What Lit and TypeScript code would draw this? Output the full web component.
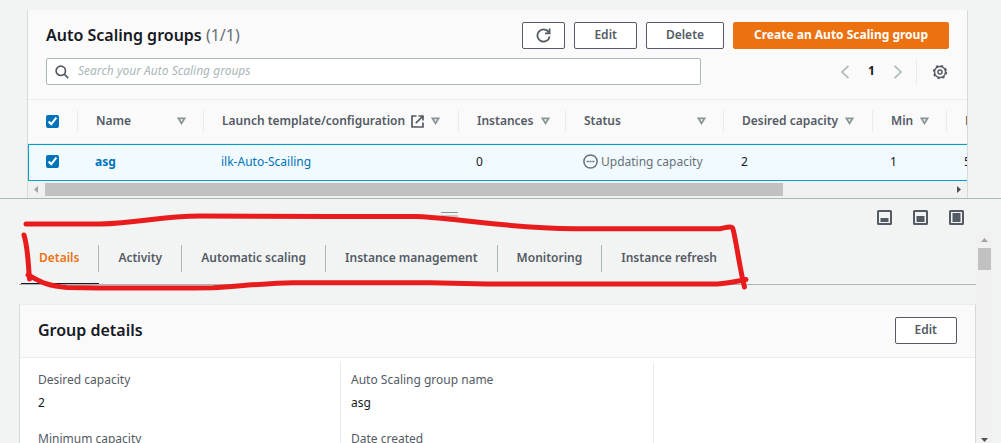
import { LitElement, html, css, svg } from "lit";
import { customElement, state } from "lit/decorators.js";

interface Column {
  key: string;
  label: string;
  external?: boolean;
  spread?: boolean;
}

const COLUMNS: Column[] = [
  { key: "name", label: "Name", spread: true },
  { key: "template", label: "Launch template/configuration", external: true },
  { key: "instances", label: "Instances" },
  { key: "status", label: "Status", spread: true },
  { key: "desired", label: "Desired capacity" },
  { key: "min", label: "Min" },
  { key: "max", label: "Max" },
];

const TABS = [
  "Details",
  "Activity",
  "Automatic scaling",
  "Instance management",
  "Monitoring",
  "Instance refresh",
];

const base = css`
  * {
    box-sizing: border-box;
  }
  button,
  input {
    font: inherit;
    color: inherit;
    margin: 0;
  }
  svg {
    display: block;
    flex: none;
  }
  .btn {
    display: inline-flex;
    align-items: center;
    justify-content: center;
    height: 27px;
    padding: 0 19px 1px;
    border: 1px solid #545b64;
    border-radius: 2px;
    background: #fff;
    color: #545b64;
    font-weight: 600;
    font-size: 12px;
    line-height: 20px;
    white-space: nowrap;
  }
  .primary {
    padding: 0 20px 1px;
    background: #ec7211;
    border-color: #ec7211;
    color: #fff;
    font-weight: 700;
  }
`;

@customElement("groups-table")
export class GroupsTable extends LitElement {
  @state() private selected = true;

  static styles = [
    base,
    css`
      :host {
        display: block;
        min-width: 0;
        margin: 10px 33px 0 27px;
        border: solid #d5dbdb;
        border-width: 0 1px;
        background: #fafafa;
      }
      .head {
        padding: 12px 18px 14px;
        border-bottom: 1px solid #eaeded;
      }
      .title-row,
      .tools,
      .actions,
      .pager {
        display: flex;
        align-items: center;
      }
      .title-row,
      .tools {
        justify-content: space-between;
      }
      .tools {
        margin-top: 9px;
      }
      .actions {
        gap: 9px;
      }
      h2 {
        margin: 0;
        padding-bottom: 2px;
        font-size: 16px;
        line-height: 24px;
        font-weight: 600;
        color: #16191f;
      }
      .count {
        font-weight: 400;
        color: #687078;
      }
      .icon-btn {
        padding: 0 13px;
      }
      .search {
        display: flex;
        align-items: center;
        gap: 9px;
        flex: 0 1 655px;
        height: 27px;
        padding: 0 8px;
        background: #fff;
        border: 1px solid #aab7b8;
        border-radius: 2px;
      }
      .search input {
        flex: 1;
        min-width: 0;
        padding: 0 0 2px;
        border: 0;
        outline: 0;
        background: none;
        font-size: 12px;
        line-height: 20px;
      }
      .search input::placeholder {
        color: #aab7b8;
        font-style: italic;
      }
      .plain {
        padding: 0;
        border: 0;
        background: none;
        line-height: 20px;
      }
      .pager {
        height: 27px;
        padding-right: 1px;
      }
      .page {
        width: 43px;
        padding-bottom: 2px;
        font-weight: 700;
        font-size: 12px;
        color: #16191f;
      }
      .rule {
        width: 1px;
        align-self: stretch;
        margin: 0 15px 0 13px;
        background: #eaeded;
      }
      .viewport {
        overflow: hidden;
      }
      table {
        width: 1153px;
        table-layout: fixed;
        border-collapse: separate;
        border-spacing: 0;
        font-size: 12px;
        line-height: 20px;
      }
      .c-check { width: 50px; }
      .c-name { width: 126px; }
      .c-template { width: 255px; }
      .c-instances { width: 107px; }
      .c-status { width: 158px; }
      .c-desired { width: 149px; }
      .c-min { width: 74px; }
      th {
        height: 44px;
        padding: 10px 0 11px;
        border-bottom: 1px solid #eaeded;
        text-align: left;
        font-weight: 600;
        color: #545b64;
        white-space: nowrap;
      }
      .cell {
        display: flex;
        align-items: center;
        height: 22px;
        gap: 7px;
        padding-left: 18px;
        border-right: 1px solid #eaeded;
      }
      .spread {
        justify-content: space-between;
        padding-right: 17px;
      }
      .label {
        display: flex;
        align-items: center;
        gap: 6px;
      }
      td {
        height: 37px;
        padding: 0 0 2px 17px;
        background: #f1faff;
        border: solid #00a1c9;
        border-width: 1px 0;
        color: #16191f;
        white-space: nowrap;
      }
      td:first-child {
        border-left-width: 1px;
      }
      .status {
        display: flex;
        align-items: center;
        gap: 3px;
        color: #687078;
      }
      input[type="checkbox"] {
        display: block;
        width: 13px;
        height: 13px;
        accent-color: #0073bb;
      }
      a {
        color: #0073bb;
        text-decoration: none;
      }
      .strong {
        font-weight: 700;
      }
      .scroll {
        display: flex;
        align-items: center;
        height: 17px;
        background: #f1f1f1;
      }
      .arrow {
        width: 17px;
        height: 17px;
      }
      .track {
        flex: 1;
      }
      .thumb {
        width: 81.5%;
        height: 13px;
        background: #c1c1c1;
      }
    `,
  ];

  private header(col: Column) {
    return html`<th scope="col">
      <div class="cell ${col.spread ? "spread" : ""}">
        <span class="label">
          ${col.label}
          ${col.external
            ? html`<svg width="13" height="13" viewBox="0 0 13 13" fill="none" stroke="#545b64" stroke-width="1.7">
                <path d="M5.5 1H1v11h11V7.5M7.5 1H12v4.5M12 1L4.8 8.2" />
              </svg>`
            : ""}
        </span>
        <svg width="9" height="8" viewBox="0 0 9 8" fill="none" stroke="#879596" stroke-width="1.7">
          <path d="M1.3 1.3h6.4L4.5 6.3z" />
        </svg>
      </div>
    </th>`;
  }

  private toggle() {
    this.selected = !this.selected;
  }

  render() {
    return html`
      <div class="head">
        <div class="title-row">
          <h2>Auto Scaling groups <span class="count">(1/1)</span></h2>
          <div class="actions">
            <button class="btn icon-btn" aria-label="Refresh">
              <svg width="15" height="15" viewBox="0 0 15 15" fill="none" stroke="#545b64" stroke-width="1.8">
                <path d="M13.6 8.3A6.1 6.1 0 1 1 12.6 4.1L13.4 5.2M13.6 .6v4.7H9" />
              </svg>
            </button>
            <button class="btn">Edit</button>
            <button class="btn">Delete</button>
            <button class="btn primary">Create an Auto Scaling group</button>
          </div>
        </div>
        <div class="tools">
          <label class="search">
            <svg width="14" height="14" viewBox="0 0 14 14" fill="none" stroke="#545b64" stroke-width="1.7">
              <circle cx="5.8" cy="5.8" r="4.7" />
              <path d="M9.2 9.2l4 4" />
            </svg>
            <input type="text" placeholder="Search your Auto Scaling groups" aria-label="Search your Auto Scaling groups" />
          </label>
          <div class="pager">
            <button class="plain" aria-label="Previous page">
              <svg width="10" height="14" viewBox="0 0 10 14" fill="none" stroke="#aab7b8" stroke-width="1.6">
                <path d="M8.5 .8L2 7l6.5 6.2" />
              </svg>
            </button>
            <button class="plain page">1</button>
            <button class="plain" aria-label="Next page">
              <svg width="10" height="14" viewBox="0 0 10 14" fill="none" stroke="#aab7b8" stroke-width="1.6">
                <path d="M1.5 .8L8 7l-6.5 6.2" />
              </svg>
            </button>
            <span class="rule"></span>
            <button class="plain" aria-label="Preferences">
              <svg width="16" height="16" viewBox="0 0 16 16" fill="none" stroke="#545b64">
                <circle cx="8" cy="8" r="5.5" stroke-width="1.4" />
                <circle cx="8" cy="8" r="6.4" stroke-width="1.5" stroke-dasharray="2.5 2.527" />
                <circle cx="8" cy="8" r="2" stroke-width="1.5" />
              </svg>
            </button>
          </div>
        </div>
      </div>
      <div class="viewport">
        <table>
          <colgroup>
            <col class="c-check" />
            ${COLUMNS.map((c) => html`<col class="c-${c.key}" />`)}
          </colgroup>
          <thead>
            <tr>
              <th scope="col">
                <div class="cell">
                  <input type="checkbox" aria-label="Select all groups" .checked=${this.selected} @change=${this.toggle} />
                </div>
              </th>
              ${COLUMNS.map((c) => this.header(c))}
            </tr>
          </thead>
          <tbody>
            <tr>
              <td>
                <input type="checkbox" aria-label="Select asg" .checked=${this.selected} @change=${this.toggle} />
              </td>
              <td><a class="strong" href="#asg">asg</a></td>
              <td><a href="#template">ilk-Auto-Scailing</a></td>
              <td>0</td>
              <td>
                <span class="status">
                  <svg width="15" height="15" viewBox="0 0 15 15" fill="none" stroke="#687078" stroke-width="1.5">
                    <circle cx="7.5" cy="7.5" r="6.6" />
                    <path d="M3.7 7.5h2M6.5 7.5h2M9.3 7.5h2" />
                  </svg>
                  Updating capacity
                </span>
              </td>
              <td>2</td>
              <td>1</td>
              <td>5</td>
            </tr>
          </tbody>
        </table>
      </div>
      <div class="scroll" aria-hidden="true">
        <svg class="arrow" viewBox="0 0 17 17"><path d="M10 5v7L6 8.5z" fill="#a3a3a3" /></svg>
        <div class="track"><div class="thumb"></div></div>
        <svg class="arrow" viewBox="0 0 17 17"><path d="M7 5v7l4-3.5z" fill="#505050" /></svg>
      </div>
    `;
  }
}

@customElement("group-panel")
export class GroupPanel extends LitElement {
  @state() private active = 0;

  static styles = [
    base,
    css`
      :host {
        display: flex;
        flex-direction: column;
        min-width: 0;
        min-height: 0;
        border-top: 1px solid #aab7b8;
      }
      .bar {
        display: flex;
        height: 32px;
        flex: none;
        padding: 0 37px 0 22px;
      }
      .handle {
        display: flex;
        flex: 1;
        justify-content: center;
        padding-top: 13px;
      }
      .grip {
        width: 17px;
        height: 5px;
        border-top: 1px solid #879596;
        border-bottom: 2px solid #c5cccc;
      }
      .sizes {
        display: flex;
        justify-content: flex-end;
        gap: 21px;
        padding-top: 11px;
      }
      .size {
        padding: 0;
        border: 0;
        background: none;
        height: 15px;
      }
      .body {
        display: flex;
        flex: 1;
        min-height: 0;
        padding: 0 8px 0 19px;
      }
      .content {
        flex: 1;
        min-width: 0;
        overflow: hidden;
      }
      .tabs {
        display: flex;
        height: 54px;
        padding-left: 2px;
        border-bottom: 1px solid #aab7b8;
      }
      .tab {
        display: flex;
        align-items: center;
        padding: 2px 0 0;
        border: 0;
        border-bottom: 1px solid transparent;
        background: none;
        color: #545b64;
        font-weight: 600;
        font-size: 12px;
        line-height: 20px;
        white-space: nowrap;
      }
      .tab span {
        display: flex;
        align-items: center;
        height: 27px;
        padding: 0 19px;
        border-right: 1px solid #aab7b8;
      }
      .tab:first-child span {
        padding-left: 18px;
      }
      .tab:last-child span {
        border-right: 0;
      }
      .on {
        color: #ec7211;
        border-bottom-color: #16191f;
      }
      .card {
        margin-top: 19px;
        background: #fff;
        border: 1px solid #d5dbdb;
        border-top-color: #eaeded;
      }
      .card-head {
        display: flex;
        align-items: center;
        justify-content: space-between;
        padding: 12px 18px 13px;
        background: #fafafa;
        border-bottom: 1px solid #eaeded;
      }
      h2 {
        margin: 0;
        padding-bottom: 1px;
        font-size: 16px;
        line-height: 24px;
        font-weight: 600;
        color: #16191f;
      }
      .grid {
        display: grid;
        grid-template-columns: repeat(3, 1fr);
        padding: 4px 8px 18px;
      }
      dl {
        margin: 0;
        padding: 8px 10px;
        border-right: 1px solid #eaeded;
      }
      dl:last-child {
        border-right: 0;
      }
      dt,
      dd {
        margin: 0;
        font-size: 12px;
        line-height: 20px;
      }
      dt {
        color: #545b64;
      }
      dd {
        margin: 3px 0 16px;
        color: #16191f;
      }
      .scroll {
        display: flex;
        flex-direction: column;
        align-items: center;
        width: 17px;
        background: #f1f1f1;
      }
      .track {
        flex: 1;
      }
      .thumb {
        width: 13px;
        height: 22px;
        background: #c1c1c1;
      }
    `,
  ];

  private size(label: string, top: number) {
    return html`<button class="size" aria-label=${label}>
      <svg width="15" height="15" viewBox="0 0 15 15">
        <rect x="1" y="1" width="13" height="13" rx=".5" fill="none" stroke="#545b64" stroke-width="2" />
        ${svg`<rect x="3.5" y=${top} width="8" height=${12 - top} fill="#545b64" />`}
      </svg>
    </button>`;
  }

  render() {
    return html`
      <div class="bar">
        <div class="handle"><div class="grip"></div></div>
        <div class="sizes">
          ${this.size("Small panel", 8)} ${this.size("Medium panel", 6)} ${this.size("Full panel", 3)}
        </div>
      </div>
      <div class="body">
        <div class="content">
          <div class="tabs" role="tablist">
            ${TABS.map(
              (t, i) => html`<button
                class="tab ${i === this.active ? "on" : ""}"
                role="tab"
                aria-selected=${i === this.active ? "true" : "false"}
                @click=${() => (this.active = i)}
              ><span>${t}</span></button>`
            )}
          </div>
          <section class="card">
            <div class="card-head">
              <h2>Group details</h2>
              <button class="btn">Edit</button>
            </div>
            <div class="grid">
              <dl>
                <dt>Desired capacity</dt>
                <dd>2</dd>
                <dt>Minimum capacity</dt>
                <dd>1</dd>
              </dl>
              <dl>
                <dt>Auto Scaling group name</dt>
                <dd>asg</dd>
                <dt>Date created</dt>
              </dl>
              <dl></dl>
            </div>
          </section>
        </div>
        <div class="scroll" aria-hidden="true">
          <svg width="17" height="17" viewBox="0 0 17 17"><path d="M5 11h7L8.5 7z" fill="#a3a3a3" /></svg>
          <div class="track"><div class="thumb"></div></div>
          <svg width="17" height="10" viewBox="0 0 17 10"><path d="M5 5h7l-3.5 4z" fill="#505050" /></svg>
        </div>
      </div>
    `;
  }
}

@customElement("app-root")
export class AppRoot extends LitElement {
  static styles = css`
    :host {
      display: grid;
      grid-template-columns: minmax(0, 1fr);
      grid-template-rows: auto minmax(0, 1fr);
      position: relative;
      height: 100vh;
      overflow: hidden;
      background: #f2f4f4;
      color: #16191f;
      font-family: "Noto Sans", "Open Sans", sans-serif;
      font-size: 12px;
      line-height: 20px;
    }
    .ink {
      position: absolute;
      left: 0;
      top: 0;
      pointer-events: none;
    }
  `;

  render() {
    return html`
      <groups-table></groups-table>
      <group-panel></group-panel>
      <svg class="ink" width="780" height="300" viewBox="0 0 780 300" fill="none" stroke="#e81c1c" stroke-width="5" stroke-linecap="round" stroke-linejoin="round" aria-hidden="true">
        <path d="M26 224H100C140 223 160 216 200 216L330 216.5H415C450 217 500 228 575 228.7H720C725 228 732 225 733 229C736 240 740 270 744.5 287" />
        <path d="M24 235C28 248 28 262 29.5 279" />
        <path d="M28 275C38 280 45 286 67 287.5C120 288.5 180 288 213 287.7C240 286 270 283 293 282.7H430L487 284H717C730 283 738 281 746 279.5" />
      </svg>
    `;
  }
}
